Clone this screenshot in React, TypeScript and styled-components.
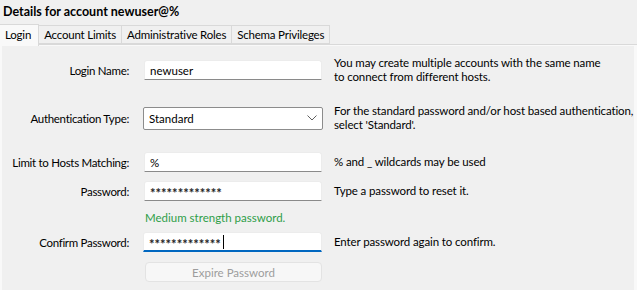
import styled, { createGlobalStyle } from "styled-components";

const GlobalStyle = createGlobalStyle`
  html, body {
    margin: 0;
    padding: 0;
    background: #f0f0f0;
  }
  body {
    font-family: Lato, "Noto Sans", sans-serif;
    font-size: 11.5px;
    color: #000;
  }
`;

const Page = styled.div`
  width: 637px;
  height: 290px;
  overflow: hidden;
  display: flex;
  flex-direction: column;
  background: #f0f0f0;
`;

const Title = styled.div`
  height: 24px;
  padding-left: 3px;
  display: flex;
  align-items: center;
  font-weight: 700;
  font-size: 12.5px;
  padding-bottom: 2px;
  box-sizing: border-box;
`;

const TabBar = styled.div`
  display: flex;
  align-items: flex-end;
  height: 20px;
  position: relative;
  z-index: 1;
`;

const Tab = styled.div<{ $active?: boolean }>`
  box-sizing: border-box;
  height: ${(p) => (p.$active ? "22px" : "19px")};
  margin-bottom: ${(p) => (p.$active ? "-2px" : "0")};
  padding: ${(p) => (p.$active ? "0 7px 3px 5px" : "0 5px")};
  display: flex;
  align-items: center;
  white-space: nowrap;
  letter-spacing: -0.2px;
  background: ${(p) => (p.$active ? "#f9f9f9" : "#f0f0f0")};
  border: 1px solid #d9d9d9;
  border-bottom: ${(p) => (p.$active ? "none" : "1px solid #d9d9d9")};
  border-left: ${(p) => (p.$active ? "none" : "1px solid #d9d9d9")};
  margin-left: ${(p) => (p.$active ? "0" : "-1px")};
`;

const TabPage = styled.div`
  flex: 1;
  background: #f9f9f9;
  border-top: 1px solid #d9d9d9;
  padding: 1px 3px 0 2px;
  display: flex;
`;

const Panel = styled.div`
  flex: 1;
  background: #f0f0f0;
  display: flex;
  flex-direction: column;
  padding-top: 10px;
`;

const Row = styled.div<{ $h: number; $gap?: number }>`
  display: grid;
  grid-template-columns: 127px 178px auto;
  column-gap: 15px;
  align-items: center;
  height: ${(p) => p.$h}px;
  margin-top: ${(p) => p.$gap ?? 0}px;
`;

const Label = styled.div`
  text-align: right;
  white-space: nowrap;
  letter-spacing: -0.3px;
  color: #000;
`;

const Help = styled.div`
  margin-left: -3px;
  line-height: 14px;
  white-space: nowrap;
  letter-spacing: -0.12px;
  color: #000;
`;

const TextBox = styled.div<{ $focused?: boolean }>`
  box-sizing: border-box;
  height: 20px;
  background: #fff;
  border: 1px solid #ececec;
  border-bottom: ${(p) => (p.$focused ? "2px solid #0067c0" : "1px solid #8a8a8a")};
  border-radius: 3px 3px 0 0;
  padding: 0 5px;
  display: flex;
  align-items: center;
  white-space: nowrap;
  margin-left: ${(p) => (p.$focused ? "-1px" : "0")};
`;

const Stars = styled.span`
  font-weight: 700;
  font-size: 13px;
  line-height: 13px;
  padding-top: 5px;
  color: #222;
`;

const Caret = styled.span`
  display: inline-block;
  width: 1px;
  height: 14px;
  background: #000;
  margin-left: 2px;
`;

const Select = styled.div`
  box-sizing: border-box;
  height: 23px;
  margin: 0 -1px;
  background: #fff;
  border: 1px solid #8c8c8c;
  border-radius: 2px;
  display: flex;
  align-items: center;
  justify-content: space-between;
  padding: 0 5px 0 5px;
`;

const Strength = styled.div`
  grid-column: 2 / 4;
  color: #2e9e48;
  padding-left: 1px;
  padding-top: 2px;
`;

const Button = styled.div`
  box-sizing: border-box;
  height: 20px;
  margin-left: 1px;
  width: 177px;
  background: #f7f7f7;
  border: 1px solid #e3e3e3;
  border-radius: 4px;
  display: flex;
  align-items: center;
  justify-content: center;
  color: #9d9d9d;
`;

function Chevron() {
  return (
    <svg width="10" height="6" viewBox="0 0 10 6">
      <path d="M0.5 0.5 L5 5 L9.5 0.5" fill="none" stroke="#606060" strokeWidth="1" />
    </svg>
  );
}

export default function App() {
  const tabs = ["Login", "Account Limits", "Administrative Roles", "Schema Privileges"];
  return (
    <Page>
      <GlobalStyle />
      <Title>Details for account newuser@%</Title>
      <TabBar>
        {tabs.map((t, i) => (
          <Tab key={t} $active={i === 0}>
            {t}
          </Tab>
        ))}
      </TabBar>
      <TabPage>
        <Panel>
          <Row $h={28}>
            <Label>Login Name:</Label>
            <TextBox>newuser</TextBox>
            <Help>
              You may create multiple accounts with the same name
              <br />
              to connect from different hosts.
            </Help>
          </Row>
          <Row $h={28} $gap={20}>
            <Label>Authentication Type:</Label>
            <Select>
              <span>Standard</span>
              <Chevron />
            </Select>
            <Help>
              For the standard password and/or host based authentication,
              <br />
              select 'Standard'.
            </Help>
          </Row>
          <Row $h={20} $gap={20}>
            <Label>Limit to Hosts Matching:</Label>
            <TextBox>%</TextBox>
            <Help>% and _ wildcards may be used</Help>
          </Row>
          <Row $h={20} $gap={9}>
            <Label>Password:</Label>
            <TextBox>
              <Stars>*************</Stars>
            </TextBox>
            <Help>Type a password to reset it.</Help>
          </Row>
          <Row $h={31}>
            <Strength>Medium strength password.</Strength>
          </Row>
          <Row $h={20}>
            <Label>Confirm Password:</Label>
            <TextBox $focused>
              <Stars>*************</Stars>
              <Caret />
            </TextBox>
            <Help>Enter password again to confirm.</Help>
          </Row>
          <Row $h={20} $gap={10}>
            <span />
            <Button>Expire Password</Button>
          </Row>
        </Panel>
      </TabPage>
    </Page>
  );
}
